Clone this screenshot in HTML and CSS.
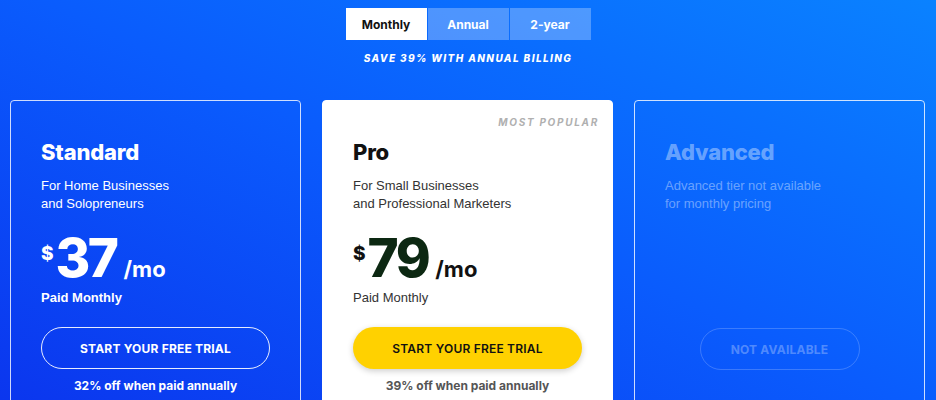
FILE: index.html
```html
<!DOCTYPE html>
<html lang="en">
<head>
  <meta charset="UTF-8" />
  <title>Pricing</title>
  <link rel="stylesheet" href="styles.css">
</head>
<body>

  <div class="billing">
    <div class="toggle">
      <button class="toggle-btn active">Monthly</button>
      <button class="toggle-btn">Annual</button>
      <button class="toggle-btn">2-year</button>
    </div>
    <p class="save">SAVE 39% WITH ANNUAL BILLING</p>
  </div>

  <section class="plans">
    <div class="plan">
      <h2 class="plan-name">Standard</h2>
      <p class="plan-desc">For Home Businesses<br>and Solopreneurs</p>
      <div class="price"><span class="cur">$</span><span class="amount">37</span><span class="per">/mo</span></div>
      <p class="billed">Paid Monthly</p>
      <a href="#" class="btn btn-outline">START YOUR FREE TRIAL</a>
      <p class="note">32% off when paid annually</p>
    </div>

    <div class="plan plan-pro">
      <span class="badge">MOST POPULAR</span>
      <h2 class="plan-name">Pro</h2>
      <p class="plan-desc">For Small Businesses<br>and Professional Marketers</p>
      <div class="price"><span class="cur">$</span><span class="amount">79</span><span class="per">/mo</span></div>
      <p class="billed">Paid Monthly</p>
      <a href="#" class="btn btn-yellow">START YOUR FREE TRIAL</a>
      <p class="note">39% off when paid annually</p>
    </div>

    <div class="plan plan-off">
      <h2 class="plan-name">Advanced</h2>
      <p class="plan-desc">Advanced tier not available<br>for monthly pricing</p>
      <a href="#" class="btn btn-disabled">NOT AVAILABLE</a>
    </div>
  </section>

</body>
</html>
```

FILE: styles.css
```css
* {
  box-sizing: border-box;
}

body {
  margin: 0;
  height: 400px;
  overflow: hidden;
  font-family: 'Liberation Sans', Arial, sans-serif;
  color: #fff;
  background: linear-gradient(25deg, #0b36ee 0%, #0a5cfd 50%, #0a82ff 100%);
}

/* billing toggle */
.billing {
  padding-top: 8px;
  text-align: center;
}

.toggle {
  display: inline-flex;
  gap: 1px;
}

.toggle-btn {
  width: 81px;
  height: 32px;
  border: none;
  padding: 0;
  background: rgba(255, 255, 255, 0.28);
  color: #fff;
  font-family: 'Inter', sans-serif;
  font-size: 12px;
  font-weight: 700;
  cursor: pointer;
}

.toggle-btn.active {
  background: #fff;
  color: #111;
}

.save {
  margin: 11px 0 0;
  font-family: 'Inter', sans-serif;
  font-size: 10px;
  font-weight: 800;
  font-style: italic;
  letter-spacing: 1.4px;
  line-height: 14px;
}

/* plans */
.plans {
  display: flex;
  gap: 21px;
  padding: 0 10px;
  margin-top: 35px;
}

.plan {
  position: relative;
  width: 291px;
  height: 330px;
  flex-shrink: 0;
  padding: 38px 30px 0;
  border: 1.5px solid rgba(255, 255, 255, 0.8);
  border-radius: 4px;
}

.plan-name {
  margin: 0;
  font-family: 'Inter', sans-serif;
  font-size: 22px;
  font-weight: 800;
  line-height: 26px;
  letter-spacing: -0.2px;
}

.plan-desc {
  margin: 12px 0 0;
  font-size: 13px;
  line-height: 18px;
}

.price {
  display: flex;
  align-items: baseline;
  margin-top: 17px;
  height: 56px;
  font-family: 'Inter', sans-serif;
  font-weight: 800;
}

.cur {
  align-self: flex-start;
  margin-top: 12px;
  font-size: 19px;
  line-height: 24px;
  margin-right: 2px;
}

.amount {
  font-size: 53px;
  line-height: 56px;
  letter-spacing: -2.5px;
}

.per {
  margin-left: 7px;
  font-size: 22px;
  font-weight: 700;
}

.billed {
  margin: 3px 0 0;
  font-size: 13px;
  font-weight: 700;
  line-height: 18px;
}

.btn {
  display: flex;
  align-items: center;
  justify-content: center;
  height: 42px;
  margin-top: 20px;
  border-radius: 21px;
  font-family: 'Inter', sans-serif;
  font-size: 12px;
  font-weight: 700;
  letter-spacing: 0.2px;
  text-decoration: none;
}

.btn-outline {
  border: 1.5px solid rgba(255, 255, 255, 0.9);
  color: #fff;
}

.note {
  margin: 9px 0 0;
  text-align: center;
  font-family: 'Inter', sans-serif;
  font-size: 12px;
  font-weight: 700;
  line-height: 16px;
}

/* pro */
.plan-pro {
  background: #fff;
  border-color: #fff;
  color: #111;
}

.badge {
  position: absolute;
  top: 15px;
  right: 13px;
  font-family: 'Inter', sans-serif;
  font-size: 10px;
  font-weight: 700;
  font-style: italic;
  letter-spacing: 1.7px;
  color: #b0b0b0;
}

.plan-pro .plan-desc {
  color: #333;
}

.plan-pro .amount {
  color: #0c2812;
}

.plan-pro .billed {
  font-weight: 400;
  color: #333;
}

.btn-yellow {
  background: #ffd100;
  color: #111;
  font-weight: 600;
  box-shadow: 0 2px 6px rgba(0, 0, 0, 0.2);
}

.plan-pro .note {
  color: #555;
}

/* advanced */
.plan-off {
  color: rgba(255, 255, 255, 0.4);
}

.btn-disabled {
  width: 160px;
  margin: 115px auto 0;
  border: 1.5px solid rgba(255, 255, 255, 0.2);
  color: rgba(255, 255, 255, 0.3);
}
```
